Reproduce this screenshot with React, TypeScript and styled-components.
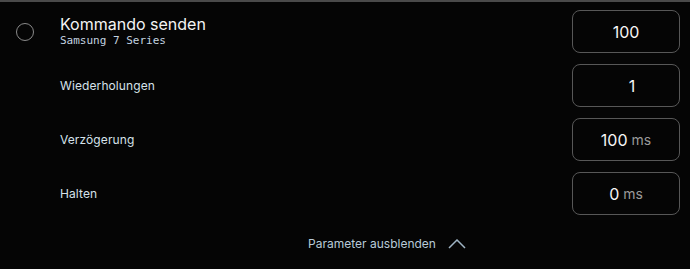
import React from "react";
import styled, { createGlobalStyle } from "styled-components";

const Global = createGlobalStyle`
  html, body {
    margin: 0;
    padding: 0;
    background: #050505;
  }
  body {
    font-family: "Inter", "Noto Sans", sans-serif;
  }
`;

const Panel = styled.div`
  width: 690px;
  height: 269px;
  box-sizing: border-box;
  border-top: 2px solid #4a4a4a;
  background: #050505;
  padding: 8px 10px 0 16px;
  display: flex;
  flex-direction: column;
`;

const Row = styled.div`
  display: flex;
  align-items: center;
  height: 43px;
  margin-bottom: 11px;
`;

const Radio = styled.div`
  width: 16px;
  height: 16px;
  border-radius: 50%;
  border: 1.5px solid #8a8a8a;
  margin-right: 26px;
  flex-shrink: 0;
`;

const Spacer = styled.div`
  width: 44px;
  flex-shrink: 0;
`;

const TitleBlock = styled.div`
  flex: 1;
  display: flex;
  flex-direction: column;
  margin-top: -2px;
`;

const Title = styled.div`
  color: #f4f4f4;
  font-size: 16px;
  line-height: 20px;
`;

const Subtitle = styled.div`
  color: #c4d4e0;
  font-family: "DejaVu Sans Mono", "Liberation Mono", monospace;
  font-size: 11px;
  line-height: 13px;
`;

const Label = styled.div`
  flex: 1;
  color: #d6e2ea;
  font-size: 12px;
  letter-spacing: 0.1px;
`;

const ValueBox = styled.div<{ $shift?: number }>`
  width: 108px;
  height: 43px;
  box-sizing: border-box;
  border: 1px solid #575757;
  border-radius: 8px;
  display: flex;
  align-items: center;
  justify-content: center;
  gap: 4px;
  padding-left: ${(p) => p.$shift ?? 0}px;
`;

const Value = styled.span`
  color: #f6f6f6;
  font-size: 16px;
`;

const Unit = styled.span`
  color: #9a9a9a;
  font-size: 14px;
`;

const Footer = styled.div`
  display: flex;
  justify-content: center;
  align-items: center;
  gap: 12px;
  margin-top: 10px;
  padding-left: 78px;
  color: #b8cad8;
  font-size: 12px;
`;

const params = [
  { label: "Wiederholungen", value: "1", shift: 12 },
  { label: "Verzögerung", value: "100", unit: "ms" },
  { label: "Halten", value: "0", unit: "ms" },
];

export default function App() {
  return (
    <>
      <Global />
      <Panel>
        <Row>
          <Radio />
          <TitleBlock>
            <Title>Kommando senden</Title>
            <Subtitle>Samsung 7 Series</Subtitle>
          </TitleBlock>
          <ValueBox>
            <Value>100</Value>
          </ValueBox>
        </Row>
        {params.map((p) => (
          <Row key={p.label}>
            <Spacer />
            <Label>{p.label}</Label>
            <ValueBox $shift={p.shift}>
              <Value>{p.value}</Value>
              {p.unit && <Unit>{p.unit}</Unit>}
            </ValueBox>
          </Row>
        ))}
        <Footer>
          <span>Parameter ausblenden</span>
          <svg width="18" height="10" viewBox="0 0 18 10" fill="none">
            <path d="M1 9 L9 1 L17 9" stroke="#9fb4c4" strokeWidth="1.5" />
          </svg>
        </Footer>
      </Panel>
    </>
  );
}
